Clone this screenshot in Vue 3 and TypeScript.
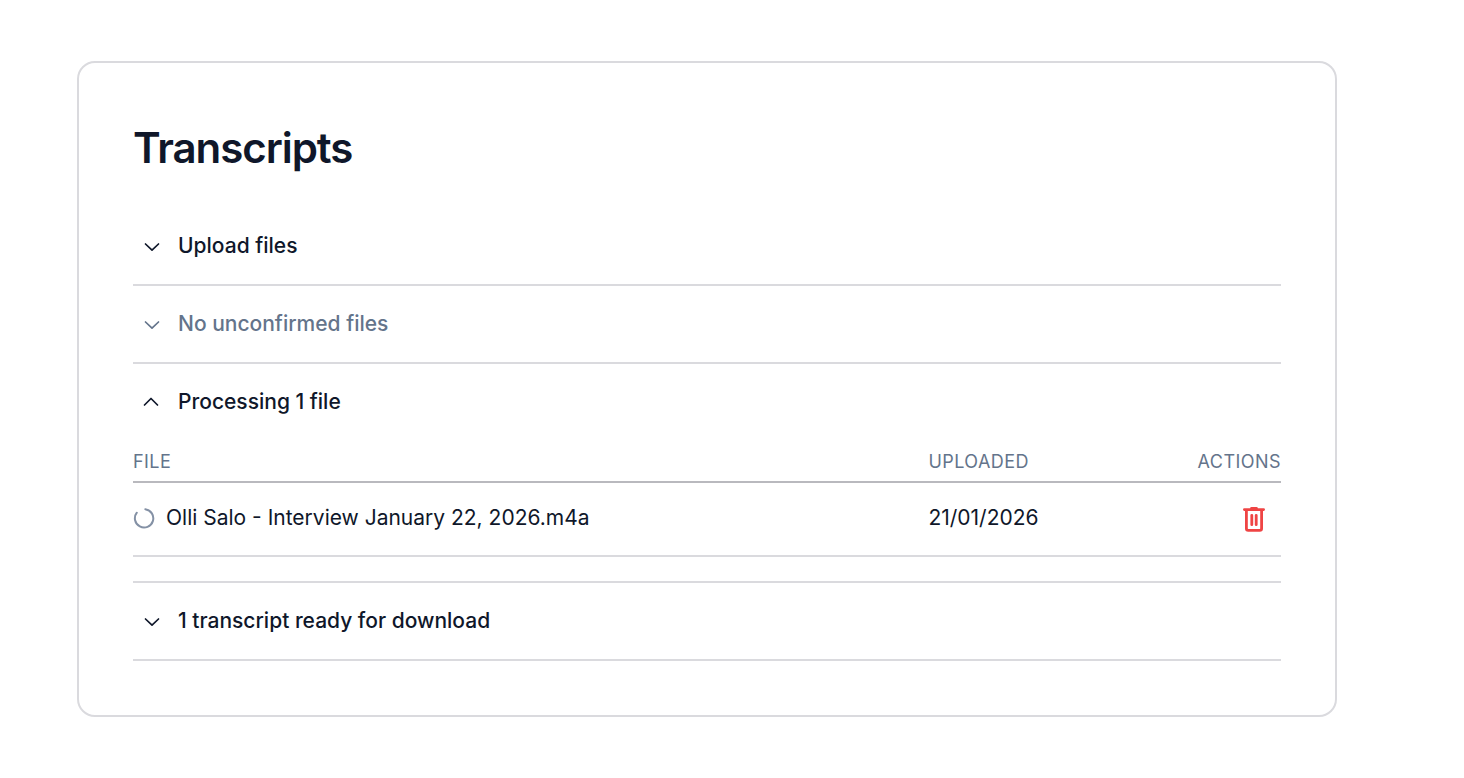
<script setup lang="ts">
import { ref } from 'vue'

interface Section {
  id: string
  label: string
  muted?: boolean
}

interface ProcessingFile {
  name: string
  uploaded: string
}

const sections: Section[] = [
  { id: 'upload', label: 'Upload files' },
  { id: 'unconfirmed', label: 'No unconfirmed files', muted: true },
  { id: 'processing', label: 'Processing 1 file' },
  { id: 'ready', label: '1 transcript ready for download' },
]

const files = ref<ProcessingFile[]>([
  { name: 'Olli Salo - Interview January 22, 2026.m4a', uploaded: '21/01/2026' },
])

const open = ref<string>('processing')

function toggle(section: Section): void {
  if (section.muted) return
  open.value = open.value === section.id ? '' : section.id
}

function remove(index: number): void {
  files.value.splice(index, 1)
}
</script>

<template>
  <main class="page">
    <article class="card">
      <h1>Transcripts</h1>
      <section v-for="section in sections" :key="section.id" class="section">
        <h2>
          <button
            type="button"
            class="toggle"
            :class="{ muted: section.muted }"
            :aria-expanded="open === section.id"
            @click="toggle(section)"
          >
            <svg class="chevron" viewBox="0 0 18 18" aria-hidden="true">
              <path :d="open === section.id ? 'M1.5 12 8 5.5l6.5 6.5' : 'M2.5 7 9 13.2 15.5 7'" />
            </svg>
            <span>{{ section.label }}</span>
          </button>
        </h2>
        <table v-if="section.id === 'processing' && open === section.id">
          <thead>
            <tr>
              <th scope="col" class="file">File</th>
              <th scope="col" class="uploaded">Uploaded</th>
              <th scope="col" class="actions">Actions</th>
            </tr>
          </thead>
          <tbody>
            <tr v-for="(file, index) in files" :key="file.name">
              <td>
                <div class="name">
                  <svg class="spinner" viewBox="0 0 22 22" aria-hidden="true">
                    <path d="M12.3 2.2A9.2 9.2 0 1 1 3.8 5.7" />
                  </svg>
                  <span>{{ file.name }}</span>
                </div>
              </td>
              <td>{{ file.uploaded }}</td>
              <td class="actions">
                <button type="button" class="delete" aria-label="Delete file" @click="remove(index)">
                  <svg viewBox="0 0 24 28" aria-hidden="true">
                    <path d="M2.4 4.6h19.200M9.500 3.400h5M4.400 4.600v18.900q0 1.800 1.800 1.800h11.600q1.800 0 1.800-1.800V4.600M9.800 10.300v9.400M14.200 10.300v9.400" />
                  </svg>
                </button>
              </td>
            </tr>
          </tbody>
        </table>
      </section>
    </article>
  </main>
</template>

<style>
body {
  margin: 0;
  background: #fff;
}
</style>

<style scoped>
.page {
  padding: 61px 127px 61px 77px;
  color: #0f172a;
  font-family: Inter, "Liberation Sans", sans-serif;
  font-size: 21px;
  line-height: 32px;
}

.card {
  padding: 54px;
  border: 2px solid #dadade;
  border-radius: 18px;
}

h1 {
  margin: 0 0 30px;
  font-size: 42px;
  font-weight: 600;
  line-height: 61px;
  letter-spacing: -0.025em;
}

h2 {
  margin: 0;
  font: inherit;
}

.section {
  border-bottom: 2px solid #dadade;
}

.toggle {
  display: flex;
  align-items: center;
  gap: 17px;
  width: 100%;
  padding: 22px 10px;
  border: 0;
  background: none;
  color: inherit;
  font: inherit;
  font-weight: 500;
  text-align: left;
  cursor: pointer;
}

.muted {
  color: #64748b;
}

.chevron {
  width: 18px;
  height: 18px;
  fill: none;
  stroke: currentColor;
  stroke-width: 1.7;
  stroke-linecap: round;
  stroke-linejoin: round;
}

table {
  width: 100%;
  margin-bottom: 24px;
  border-collapse: separate;
  border-spacing: 0;
  table-layout: fixed;
}

th {
  padding: 6px 0 3px;
  border-bottom: 2px solid #b9b9be;
  color: #64748b;
  font-size: 18px;
  font-weight: 400;
  letter-spacing: 0.025em;
  text-align: left;
  text-transform: uppercase;
}

.uploaded {
  width: 18%;
}

th.actions {
  width: 146px;
}

td {
  padding: 19px 0 21px;
  border-bottom: 2px solid #dadade;
}

th.actions,
td.actions {
  text-align: right;
}

.name {
  display: flex;
  align-items: center;
  gap: 11px;
}

.spinner {
  width: 22px;
  height: 22px;
  fill: none;
  stroke: #8491a5;
  stroke-width: 2;
  stroke-linecap: round;
}

.delete {
  display: inline-flex;
  padding: 0 15px;
  border: 0;
  background: none;
  vertical-align: middle;
  cursor: pointer;
}

.delete svg {
  width: 24px;
  height: 28px;
  fill: none;
  stroke: #ef4444;
  stroke-width: 2.8;
  stroke-linecap: round;
  stroke-linejoin: round;
}
</style>
